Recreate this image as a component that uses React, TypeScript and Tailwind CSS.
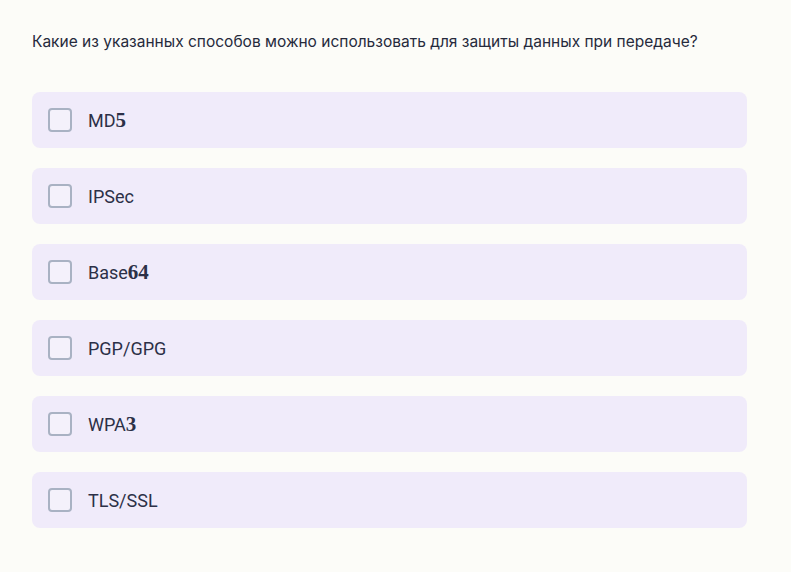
const options: { text: string; num?: string }[] = [
  { text: "MD", num: "5" },
  { text: "IPSec" },
  { text: "Base", num: "64" },
  { text: "PGP/GPG" },
  { text: "WPA", num: "3" },
  { text: "TLS/SSL" },
];

export default function App() {
  return (
    <div className="min-h-screen bg-[#fcfcf8] px-8 pt-[31px] font-['Inter',sans-serif]">
      <p className="text-[15.5px] leading-[22px] text-[#262a3c]">
        Какие из указанных способов можно использовать для защиты данных при передаче?
      </p>

      <div className="mt-[39px] flex w-[715px] flex-col gap-5">
        {options.map((o) => (
          <label
            key={o.text}
            className="flex h-14 items-center gap-4 rounded-lg bg-[#f0ebfa] px-4"
          >
            <span className="h-6 w-6 shrink-0 rounded-[4px] border-2 border-[#a9b2c3] bg-[#f4f1fb]" />
            <span className="font-['Roboto',sans-serif] text-[18px] text-[#2c3047]">
              {o.text}
              {o.num && (
                <span className="font-['Liberation_Serif','Times_New_Roman',serif] text-[21px] font-bold leading-none">
                  {o.num}
                </span>
              )}
            </span>
          </label>
        ))}
      </div>
    </div>
  );
}
